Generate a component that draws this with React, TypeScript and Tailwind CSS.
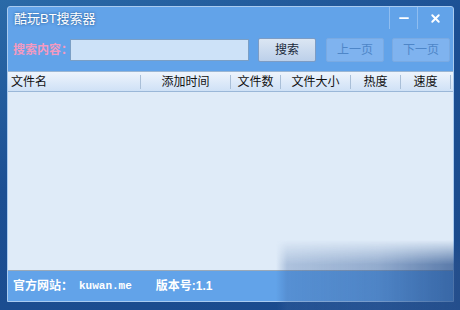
import { X, Minus } from 'lucide-react';

const cjk = { fontFamily: '"Liberation Sans", "Noto Sans CJK SC", sans-serif' };

const columns = [
    { label: '文件名', w: 'w-[133px]', align: 'text-left pl-[3px]' },
    { label: '添加时间', w: 'w-[90px]', align: 'text-center' },
    { label: '文件数', w: 'w-[50px]', align: 'text-center' },
    { label: '文件大小', w: 'w-[70px]', align: 'text-center' },
    { label: '热度', w: 'w-[50px]', align: 'text-center' },
    { label: '速度', w: 'w-[50px]', align: 'text-center' },
];

const App = () => {
    return (
        <div
            className="relative w-[460px] h-[310px] overflow-hidden bg-[linear-gradient(160deg,#2a6aa8_0%,#1c4f93_40%,#1a4a8c_100%)] pt-[6px] pl-[7px]"
            style={cjk}
        >
            <div className="w-[447px] h-[296px] flex flex-col border border-[#a9cbf0] rounded-t-[3px] bg-[#62a3e9] overflow-hidden">
                {/* title bar */}
                <div className="flex h-[24px] items-start">
                    <div className="flex-1 pl-[6px] pt-[4px] text-[13px] leading-[16px] text-white [text-shadow:0_0_3px_#1d4f8a]">
                        酷玩BT搜索器
                    </div>
                    <div className="w-[28px] h-[22px] flex items-center justify-center border-l border-[#8fbdf0]">
                        <Minus size={14} strokeWidth={3} className="text-white" />
                    </div>
                    <div className="w-[36px] h-[22px] flex items-center justify-center border-l border-[#8fbdf0]">
                        <X size={13} strokeWidth={3.5} className="text-white" />
                    </div>
                </div>

                {/* search row */}
                <div className="flex items-center h-[40px] pl-[5px] pb-[2px]">
                    <span className="shrink-0 w-[57px] whitespace-nowrap text-[12px] text-[#f49ac0] font-bold">搜索内容：</span>
                    <div className="shrink-0 w-[179px] h-[22px] bg-[#cde2f8] border border-[#7a9fc6]" />
                    <button className="shrink-0 ml-[9px] w-[58px] h-[24px] text-[12px] text-[#1a2a3a] rounded-[2px] border border-[#7d9cc4] bg-[linear-gradient(#dbe6f3,#bcd0ea)]">
                        搜索
                    </button>
                    <button className="shrink-0 ml-[10px] w-[58px] h-[24px] text-[12px] text-[#4e86c8] rounded-[2px] border border-[#7aaae2] bg-[#7fb3ef]">
                        上一页
                    </button>
                    <button className="shrink-0 ml-[8px] w-[58px] h-[24px] text-[12px] text-[#4e86c8] rounded-[2px] border border-[#7aaae2] bg-[#7fb3ef]">
                        下一页
                    </button>
                </div>

                {/* list */}
                <div className="flex-1 flex flex-col bg-[#dfebf8] border-t border-[#9bb6d3]">
                    <div className="flex h-[20px] items-center bg-[linear-gradient(#eef4fc,#cfe1f6)] border-b border-[#9ab7d8] text-[12px] text-[#111]">
                        {columns.map((c) => (
                            <div key={c.label} className={`${c.w} ${c.align} h-[14px] leading-[14px] border-r border-[#a9bfd8]`}>
                                {c.label}
                            </div>
                        ))}
                    </div>
                    <div className="flex-1" />
                </div>

                {/* footer */}
                <div className="h-[31px] flex items-center pl-[5px] border-t border-[#9aa9b8] text-[12px] font-bold text-white">
                    <span>官方网站：</span>
                    <span className="ml-[6px] font-['Liberation_Mono'] text-[11px]">kuwan.me</span>
                    <span className="ml-[24px]">版本号:1.1</span>
                </div>
            </div>

            {/* faded corner */}
            <div className="absolute left-[276px] top-[240px] w-[184px] h-[70px] bg-[linear-gradient(90deg,rgba(60,100,160,0)_0%,rgba(60,100,160,0.3)_6%,rgba(55,95,155,0.45)_55%,rgba(40,80,140,0.75)_100%)] [mask-image:linear-gradient(180deg,transparent_0%,black_35%)]" />
        </div>
    );
};

export default App;
